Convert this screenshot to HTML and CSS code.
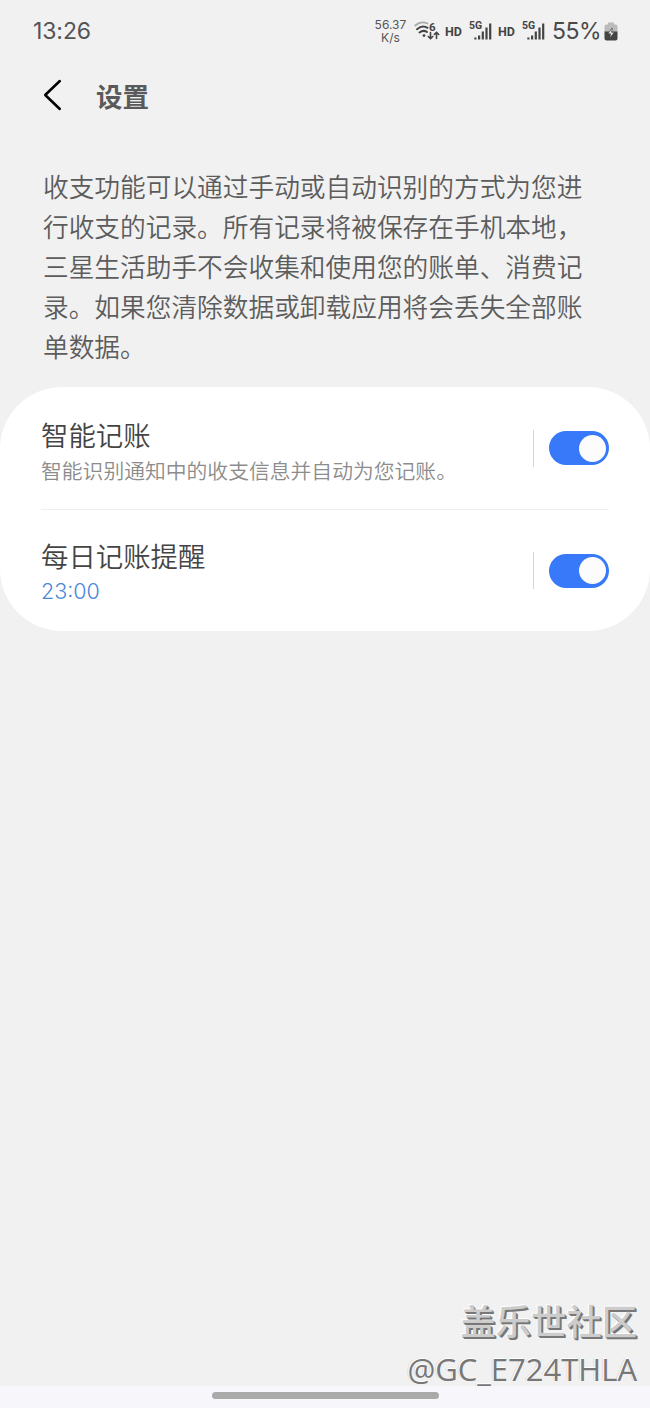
FILE: index.html
```html
<!DOCTYPE html>
<html lang="zh-CN">
<head>
<meta charset="UTF-8">
<meta name="viewport" content="width=device-width, initial-scale=1.0">
<title>设置</title>
<link rel="stylesheet" href="styles.css">
</head>
<body>
<div class="screen">
    <div class="status-bar">
        <span class="time">13:26</span>
        <div class="status-icons">
            <div class="speed"><span>56.37</span><span>K/s</span></div>
            <svg class="wifi" width="26" height="22" viewBox="0 0 26 22">
                <g fill="none" stroke-linecap="round">
                    <path d="M1.200 5.500Q7 .5 13.500 3.500" stroke="#aaa" stroke-width="1.800"/>
                    <path d="M3 9.200Q8.500 4.500 13.500 7.800M5.500 12.500Q9.500 9.500 13 12" stroke="#444" stroke-width="2"/>
                    <path d="M16.500 12.500v6M14.300 16.500l2.200 2.200 2.200-2.200M22.500 18.500v-6M20.300 14.500l2.200-2.200 2.200 2.200" stroke="#444" stroke-width="1.600"/>
                </g>
                <circle cx="10" cy="15.600" r="1.400" fill="#444"/>
                <text x="15" y="10.500" class="tiny six">6</text>
            </svg>
            <span class="hd">HD</span>
            <svg class="signal" width="24" height="22" viewBox="0 0 24 22">
                <text x="0" y="8.800" class="tiny">5G</text>
                <path d="M5.300 17.400h2.200v2.200H5.300zM9 15.400h2.200v4.200H9zM12.700 11.500h2.200v8.100h-2.200zM16.400 7.500h2.200v12.100h-2.200zM20.100 3.600h2.200v16h-2.200z" fill="#444"/>
            </svg>
            <span class="hd">HD</span>
            <svg class="signal" width="24" height="22" viewBox="0 0 24 22">
                <text x="0" y="8.800" class="tiny">5G</text>
                <path d="M5.300 17.400h2.200v2.200H5.300zM9 15.400h2.200v4.200H9zM12.700 11.500h2.200v8.100h-2.200zM16.400 7.500h2.200v12.100h-2.200zM20.100 3.600h2.200v16h-2.200z" fill="#444"/>
            </svg>
            <span class="percent">55%</span>
            <svg class="battery" width="14" height="19" viewBox="0 0 14 19">
                <path d="M4 .5h6v2h1.500q2 0 2 2V10H.5V4.500q0-2 2-2H4z" fill="#bbb"/>
                <path d="M.5 9.500h13v7q0 2-2 2h-9q-2 0-2-2z" fill="#444"/>
                <path d="M8.200 6 3.900 11.800h2.600l-.6 4.200L10.300 10.300H7.600z" fill="#eee" stroke="#444" stroke-width=".7"/>
            </svg>
        </div>
    </div>

    <div class="header">
        <svg class="back" width="20" height="34" viewBox="0 0 20 34">
            <path d="M17.800 3 3.200 17 17.800 31" fill="none" stroke="#000" stroke-width="2.500" stroke-linecap="round" stroke-linejoin="round"/>
        </svg>
        <h1>设置</h1>
    </div>

    <p class="description">收支功能可以通过手动或自动识别的方式为您进行收支的记录。所有记录将被保存在手机本地，三星生活助手不会收集和使用您的账单、消费记录。如果您清除数据或卸载应用将会丢失全部账单数据。</p>

    <div class="card">
        <div class="row">
            <div class="text smart">
                <div class="title">智能记账</div>
                <div class="subtitle">智能识别通知中的收支信息并自动为您记账。</div>
            </div>
            <div class="switch-area"><div class="switch"></div></div>
        </div>
        <div class="row">
            <div class="text">
                <div class="title">每日记账提醒</div>
                <div class="alarm">23:00</div>
            </div>
            <div class="switch-area"><div class="switch"></div></div>
        </div>
    </div>

    <div class="nav-bar"><div class="handle"></div></div>

    <div class="watermark">
        <div class="community">盖乐世社区</div>
        <div class="user">@GC_E724THLA</div>
    </div>
</div>
</body>
</html>
```

FILE: styles.css
```css
* {
  box-sizing: border-box;
}

body {
  margin: 0;
  background-color: #f1f1f1;
  font-family: Inter, "Noto Sans CJK SC", sans-serif;
  color: #444;
}

svg {
  display: block;
}

.screen {
  position: relative;
  display: flex;
  flex-direction: column;
  width: 650px;
  height: 1408px;
  overflow: hidden;
}

/* status bar */
.status-bar {
  display: flex;
  justify-content: space-between;
  align-items: center;
  height: 62px;
  padding: 0 32px 0 33px;
}

.time {
  font-size: 23px;
  letter-spacing: -0.1px;
  color: #555;
}

.status-icons {
  display: flex;
  align-items: center;
}

.speed {
  display: flex;
  flex-direction: column;
  align-items: center;
  width: 33px;
  margin-right: 7px;
  font-size: 12px;
  line-height: 13px;
  color: #555;
}

.tiny {
  font-family: Roboto, sans-serif;
  font-size: 10.5px;
  font-weight: 700;
  fill: #444;
}

.six {
  font-size: 11.5px;
}

.hd {
  width: 17px;
  margin: 0 7px 0 5px;
  font-family: Roboto, sans-serif;
  font-size: 12.5px;
  font-weight: 700;
}

.percent {
  margin: 0 3px 0 6px;
  font-family: Inter, sans-serif;
  font-size: 23px;
  letter-spacing: -0.5px;
  color: #4a4a4a;
}

/* header */
.header {
  display: flex;
  align-items: center;
  height: 66px;
  padding: 0 42px;
}

.header h1 {
  margin: 3px 0 0 34px;
  font-size: 26.5px;
  font-weight: 700;
  line-height: 40px;
  color: #5a5a5a;
}

.description {
  width: 545px;
  margin: 38px 0 0 43px;
  font-family: "Noto Sans CJK SC", sans-serif;
  font-size: 25.7px;
  font-weight: 350;
  line-height: 40px;
  color: #5c5c5c;
}

/* card */
.card {
  height: 244px;
  margin-top: 21px;
  padding: 0 41px;
  background-color: #fff;
  border-radius: 62px;
}

.row {
  display: flex;
  justify-content: space-between;
  align-items: center;
  height: 122px;
}

.row + .row {
  border-top: 1px solid #f0f0f0;
}

.text {
  padding-top: 5px;
  font-weight: 350;
}

.smart {
  padding-top: 11px;
}

.title {
  font-size: 27.4px;
  line-height: 36px;
}

.subtitle {
  margin-top: 1px;
  font-size: 20.8px;
  line-height: 34px;
  color: #8c8c8c;
}

.alarm {
  font-size: 21.5px;
  line-height: 32px;
  color: #4a86d8;
}

.switch-area {
  display: flex;
  align-items: center;
  height: 37px;
  padding-left: 15px;
  border-left: 1px solid #d5d5d5;
}

.switch {
  display: flex;
  justify-content: flex-end;
  align-items: center;
  width: 60px;
  height: 34px;
  padding-right: 3px;
  background-color: #3779f8;
  border-radius: 17px;
}

.switch::after {
  content: "";
  width: 27px;
  height: 27px;
  border-radius: 50%;
  background-color: #fcfcfc;
}

/* bottom bar */
.nav-bar {
  display: flex;
  justify-content: center;
  height: 22px;
  margin-top: auto;
  padding-top: 6px;
  background-color: #f6f6fb;
}

.handle {
  width: 227px;
  height: 7px;
  border-radius: 4px;
  background-color: #aaa;
}

.watermark {
  position: absolute;
  right: 13px;
  bottom: 17px;
  text-align: right;
  white-space: nowrap;
}

.community {
  font-size: 35.3px;
  font-weight: 500;
  line-height: 48px;
  color: #ccc;
  text-shadow: 1px 1px 0 #777, 2px 2px 0 #777, -1px -1px 0 #fff;
}

.user {
  font-family: "Open Sans", sans-serif;
  font-size: 31px;
  line-height: 44px;
  color: #777;
  text-shadow: -1px -1px 0 #fff, -2px -1px 0 #ddd;
}
```
